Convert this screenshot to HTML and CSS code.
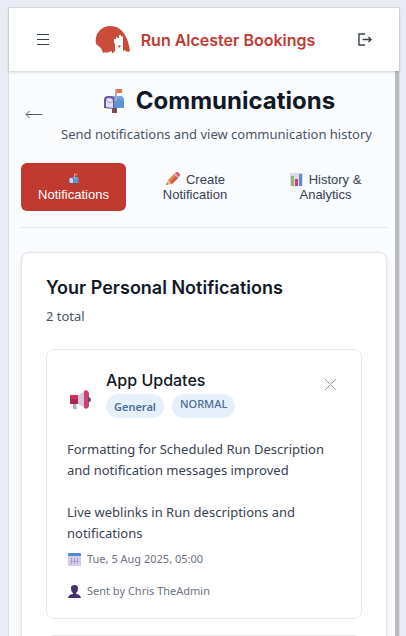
FILE: index.html
```html
<!DOCTYPE html>
<html lang="en">
<head>
<meta charset="utf-8">
<meta name="viewport" content="width=device-width, initial-scale=1">
<title>Communications - Run Alcester Bookings</title>
<link rel="stylesheet" href="styles.css">
</head>
<body>
<svg width="0" height="0" class="symbols" aria-hidden="true">
  <symbol id="mailbox" viewBox="0 0 24 26">
    <rect x="10" y="18" width="5" height="7" fill="#7b4d51"/>
    <path d="M6 8h12q4 0 4 5v7H8z" fill="#5d94d5"/>
    <path d="M10 8h8q4 0 4 5l-4-2z" fill="#77a9e2"/>
    <path d="M2 12q0-4 4-4h2q4 0 4 4v9l-10-1z" fill="#6558a0"/>
    <path d="M4 12q0-2 3-2t4 2v8l-7-1z" fill="#e4ddf0"/>
    <path d="M4 12l4 3 3-2" fill="none" stroke="#aaa0c6"/>
    <path d="M13 1h2v12h-2z" fill="#b9a8b8"/>
    <path d="M15 1h5v4h-5z" fill="#ed7148"/>
  </symbol>
</svg>
<div class="app">
  <header class="topbar">
    <button class="icon-button" type="button" aria-label="Menu">
      <svg class="menu-icon" width="12" height="12" viewBox="0 0 12 12"><path d="M0 .5h12M0 5.5h12M0 10.5h12"/></svg>
    </button>
    <a class="brand" href="#">
      <svg width="36" height="30" viewBox="0 0 36 30" aria-hidden="true">
        <path fill="#c94d38" d="M1 19C-1 8 7 1 15 1c8 0 12 4 15 9 3 5 4 10 5 16l-2 1-1-1-1 1-1-2-2 1V12l-1-1-1 1v-2h-2v3h-2v-1h-1v2h-2v4l1 1v7l-1 1-1 1h-1v-2l-3 1-1 1-1-1-1 1-1-1-2 1-1-3-2-3-3-2z"/>
        <path fill="#c94d38" d="M23 21l1-1 1 1 1-1v1l-2 2z"/>
      </svg>
      <span>Run Alcester Bookings</span>
    </a>
    <button class="icon-button" type="button" aria-label="Log out">
      <svg class="logout-icon" width="14" height="13" viewBox="0 0 14 13"><path d="M7 1H1v11h6M4.500 6.500h8.500M10.500 4l2.500 2.500L10.500 9"/></svg>
    </button>
  </header>
  <main class="content">
    <div class="page-head">
      <button class="back" type="button" aria-label="Back">
        <svg width="18" height="9" viewBox="0 0 18 9"><path d="M17.500 4.500H1M4.500 1L1 4.500 4.500 8"/></svg>
      </button>
      <div class="page-title">
        <h1><svg width="24" height="26"><use href="#mailbox"/></svg>Communications</h1>
        <p>Send notifications and view communication history</p>
      </div>
    </div>
    <nav class="tabs">
      <button class="tab active" type="button"><svg width="13" height="13"><use href="#mailbox"/></svg><br>Notifications</button>
      <button class="tab" type="button"><svg class="lead" width="15" height="14" viewBox="0 0 15 14"><path d="M1 13l2-5 4 4z" fill="#e8b58d"/><path d="M3 8l6-6 4 4-6 6z" fill="#e58150"/><path d="M5 10l6-6 2 2-6 6z" fill="#c95d42"/><path d="M9 2l1-1 4 4-1 1z" fill="#b9b4bd"/><path d="M10 1q2-2 4 0t0 4z" fill="#dc596c"/><path d="M1 13l1-2 1 1z" fill="#554"/></svg>Create<br>Notification</button>
      <button class="tab" type="button"><svg class="lead" width="13" height="13" viewBox="0 0 13 13"><path d="M0 0h13v13H0z" fill="#ddd9e9"/><path d="M1 3h3v10H1z" fill="#91b96b"/><path d="M5 6h3v7H5z" fill="#ca3f74"/><path d="M9 1h3v12H9z" fill="#608bd1"/></svg>History &amp;<br>Analytics</button>
    </nav>
    <section class="panel">
      <h2>Your Personal Notifications</h2>
      <p class="total">2 total</p>
      <div class="list">
        <article class="note">
          <div class="note-head">
            <svg class="note-icon" width="21" height="20" viewBox="0 0 21 20" aria-hidden="true"><path d="M3 13h3l1 6H3z" fill="#b6adc5"/><path d="M0 5h8v9H0z" fill="#d02f60"/><path d="M0 9h8v5H0z" fill="#a92850"/><path d="M8 5l7-4v17l-7-4z" fill="#d3cbdc"/><path d="M14 1q4-2 5 2v13q-1 4-5 2z" fill="#d33f6c"/><path d="M18 7h1q2 1 2 3t-2 2h-1z" fill="#654b6c"/></svg>
            <div class="note-title">
              <h3>App Updates</h3>
              <div class="badges"><span class="badge general">General</span><span class="badge priority">NORMAL</span></div>
            </div>
            <button class="dismiss" type="button" aria-label="Dismiss">
              <svg width="13" height="13" viewBox="0 0 13 13"><path d="M1 1l11 11M12 1L1 12"/></svg>
            </button>
          </div>
          <p class="message">Formatting for Scheduled Run Description and notification messages improved</p>
          <p class="message">Live weblinks in Run descriptions and notifications</p>
          <div class="meta"><svg width="13" height="13" viewBox="0 0 13 13"><path d="M0 1h13v12H0z" fill="#d5cde8"/><path d="M0 1q0-1 1-1h11q1 0 1 1v2H0z" fill="#4e87d3"/><path d="M3.500 5v6M6.500 5v6M9.500 5v6M2 8.500h9" stroke="#aaa2c8" fill="none"/></svg>Tue, 5 Aug 2025, 05:00</div>
          <div class="meta"><svg width="13" height="13" viewBox="0 0 13 13"><path d="M3 3q0-3 3.500-3T10 3q0 4-2 5v1q4 0 5 4H0q1-4 5-4V8Q3 7 3 3z" fill="#463071"/></svg>Sent by Chris TheAdmin</div>
        </article>
        <article class="note"></article>
      </div>
    </section>
  </main>
</div>
</body>
</html>
```

FILE: styles.css
```css
* { box-sizing: border-box; }

body {
  margin: 0;
  height: 100vh;
  padding: 7px 6px 0 8px;
  overflow: hidden;
  background: #e9ecf5;
  color: #374151;
  font-family: "Noto Sans", sans-serif;
  font-size: 13px;
}

h1, h2, h3, p { margin: 0; }
button { border: 0; padding: 0; background: none; color: inherit; }
svg { flex: none; }
.symbols { position: absolute; }

.app {
  display: flex;
  flex-direction: column;
  height: 100%;
  border: 1px solid #dcdde0;
  border-bottom: 0;
  background: #f9fbfd;
}

.topbar {
  display: flex;
  align-items: center;
  justify-content: space-between;
  height: 63px;
  padding: 0 22px;
  background: #fff;
  box-shadow: 0 1px 3px rgba(0, 0, 0, 0.18);
  z-index: 1;
}

.icon-button {
  display: grid;
  place-items: center;
  width: 24px;
  height: 32px;
}

.menu-icon, .logout-icon { fill: none; stroke: #374151; }
.logout-icon { stroke-width: 1.4; }

.brand {
  display: flex;
  align-items: center;
  gap: 10px;
  padding-left: 2px;
  color: #c03a32;
  font: 600 16px/24px Inter, sans-serif;
  text-decoration: none;
}

.content {
  flex: 1;
  min-height: 0;
  overflow: hidden;
  padding: 15px 8px 0 12px;
  border-right: 4px solid #b9bbbd;
}

.page-head {
  display: flex;
  align-items: flex-start;
  gap: 12px;
  padding-right: 13px;
}

.back {
  display: grid;
  place-items: center;
  width: 26px;
  height: 56px;
}

.back svg { fill: none; stroke: #555d66; }

.page-title { flex: 1; text-align: center; white-space: nowrap; }

h1 {
  display: flex;
  align-items: center;
  justify-content: center;
  gap: 10px;
  padding-left: 4px;
  color: #111827;
  font: 700 24px/30px Inter, sans-serif;
}

.page-title p { margin-top: 6px; color: #4b5563; line-height: 24px; }

.tabs {
  display: grid;
  grid-template-columns: 105fr 106fr 123fr;
  gap: 16px;
  margin-top: 17px;
  padding-bottom: 16px;
  border-bottom: 1px solid #e1e4e8;
}

.tab {
  height: 48px;
  border-radius: 6px;
  color: #374151;
  font: 500 13px/15px "Liberation Sans", sans-serif;
}

.tab svg { vertical-align: -2px; }
.tab .lead { margin-right: 6px; }
.tab.active { background: #c0392f; color: #fff; }

.panel {
  margin-top: 24px;
  padding: 24px;
  border: 1px solid #e3e6ea;
  border-radius: 8px;
  background: #fff;
  box-shadow: 0 1px 3px rgba(0, 0, 0, 0.12);
}

h2 { color: #111827; font: 600 18px/22px Inter, sans-serif; }
.total { margin-top: 8px; color: #4b5563; line-height: 18px; }

.list { display: grid; gap: 16px; margin-top: 24px; }

.note {
  min-height: 100px;
  padding: 20px 20px 18px;
  border: 1px solid #e3e4e6;
  border-radius: 8px;
}

.note-head { display: flex; align-items: center; gap: 15px; margin-bottom: 21px; }
.note-icon { align-self: flex-end; margin: 0 0 8px 3px; }
.note-title { flex: 1; }
h3 { color: #111827; font: 500 16px/20px Inter, sans-serif; }
.badges { display: flex; gap: 8px; margin-top: 4px; }

.badge {
  height: 24px;
  padding: 0 8px;
  border-radius: 12px;
  background: #e5f0fb;
  color: #496c96;
}

.general { font-size: 11px; font-weight: 600; line-height: 25px; }
.priority { font-size: 11px; font-weight: 500; line-height: 20px; }

.dismiss { align-self: flex-start; padding: 8px 4px 0 0; }
.dismiss svg { display: block; fill: none; stroke: #9a9da3; }

.message { line-height: 21px; }
.message + .message { margin-top: 21px; }

.meta {
  display: flex;
  align-items: center;
  gap: 6px;
  padding-left: 1px;
  color: #6b7280;
  font-size: 11px;
  line-height: 18px;
}

.message + .meta { margin-top: 6px; }
.meta + .meta { margin-top: 14px; }
```
